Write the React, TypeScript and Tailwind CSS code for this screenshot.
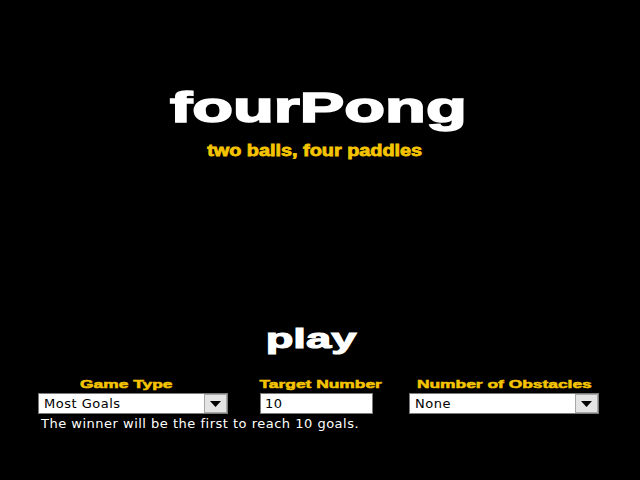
import React from "react";

const heavy = { fontFamily: '"Liberation Sans", Arial, sans-serif' };
const plain = { fontFamily: '"DejaVu Sans", Verdana, sans-serif' };

function DropBox({ value }: { value: string }) {
  return (
    <div className="flex h-[21px] w-[190px] border border-[#7a7a7a] bg-white">
      <div
        className="flex-1 pl-[5px] text-[13px] leading-[19px] tracking-[0.5px] text-black"
        style={plain}
      >
        {value}
      </div>
      <div className="flex w-[23px] items-center justify-center border border-[#a8a8a8] bg-[#e4e4e4]">
        <svg width="11" height="6" viewBox="0 0 11 6">
          <path d="M0 0 H11 L5.5 6 Z" fill="#000" />
        </svg>
      </div>
    </div>
  );
}

function Label({ text, shift }: { text: string; shift: string }) {
  return (
    <div className={`flex h-[14px] justify-center ${shift}`}>
      <span
        className="inline-block scale-x-[1.58] text-[11px] font-bold leading-[14px] text-[#f5c400] [-webkit-text-stroke:0.5px_#f5c400]"
        style={heavy}
      >
        {text}
      </span>
    </div>
  );
}

export default function App() {
  return (
    <div className="flex h-[480px] w-[640px] flex-col items-center overflow-hidden bg-black">
      <div className="mr-[3px] mt-[84px] h-[48px]">
        <span
          className="inline-block scale-x-[1.59] text-[42px] font-bold leading-[48px] text-white [-webkit-text-stroke:1.6px_white]"
          style={heavy}
        >
          fourPong
        </span>
      </div>
      <div className="mr-[10px] mt-[6px] h-[18px]">
        <span
          className="inline-block scale-x-[1.24] text-[16px] font-bold leading-[18px] text-[#f5c400] [-webkit-text-stroke:0.8px_#f5c400]"
          style={heavy}
        >
          two balls, four paddles
        </span>
      </div>
      <div className="mr-[17px] mt-[167px] h-[32px]">
        <span
          className="inline-block scale-x-[1.62] text-[28px] font-bold leading-[32px] text-white [-webkit-text-stroke:1.1px_white]"
          style={heavy}
        >
          play
        </span>
      </div>

      <div className="mt-[22px] flex self-stretch pl-[38px]">
        <div className="w-[190px]">
          <Label text="Game Type" shift="pr-[13px]" />
          <div className="mt-[2px]">
            <DropBox value="Most Goals" />
          </div>
        </div>
        <div className="ml-[32px] w-[113px]">
          <Label text="Target Number" shift="pl-[8px]" />
          <div className="mt-[2px] h-[21px] w-[113px] border border-[#7a7a7a] bg-white">
            <div
              className="pl-[4px] text-[13px] leading-[19px] tracking-[0.5px] text-black"
              style={plain}
            >
              10
            </div>
          </div>
        </div>
        <div className="ml-[36px] w-[190px]">
          <Label text="Number of Obstacles" shift="" />
          <div className="mt-[2px]">
            <DropBox value="None" />
          </div>
        </div>
      </div>
      <div
        className="mt-[2px] self-stretch pl-[41px] text-[13px] leading-[16px] tracking-[0.5px] text-white"
        style={plain}
      >
        The winner will be the first to reach 10 goals.
      </div>
    </div>
  );
}
